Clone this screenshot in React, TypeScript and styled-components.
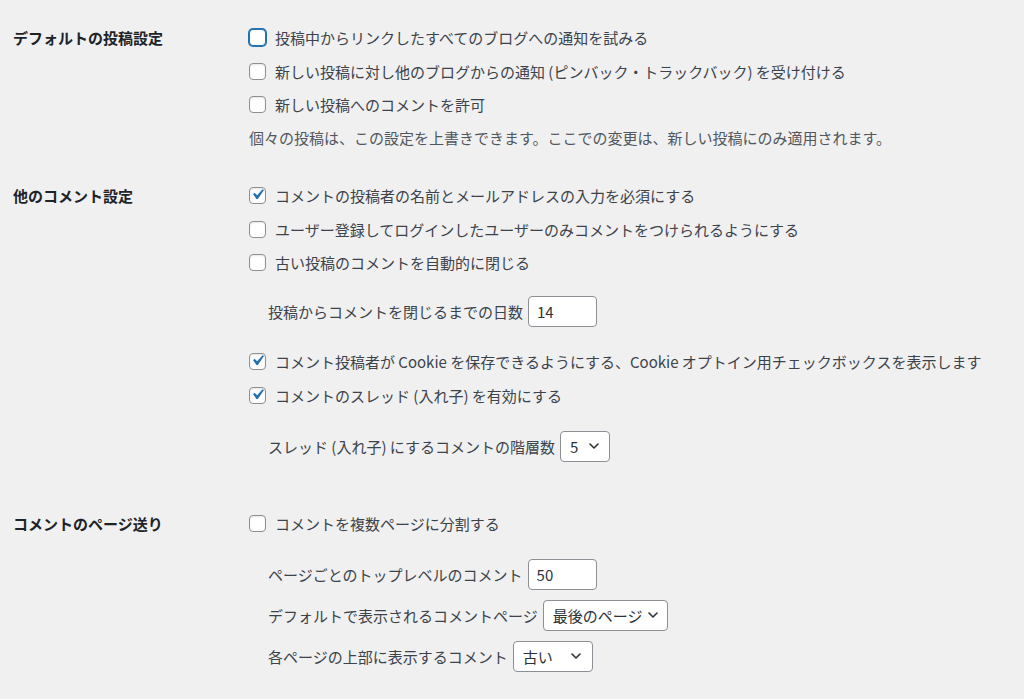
import React from 'react';
import styled, { createGlobalStyle } from 'styled-components';

const Global = createGlobalStyle`
  html, body { margin: 0; padding: 0; background: #f0f0f1; }
  body {
    font-family: "Noto Sans CJK JP", "Noto Sans", sans-serif;
    color: #3c434a;
    font-size: 15px;
  }
  * { box-sizing: border-box; }
`;

const Page = styled.div`
  display: flex;
  flex-direction: column;
  padding: 21px 0 0 13px;
`;

const Section = styled.section<{ $after: number }>`
  display: grid;
  grid-template-columns: 236px 1fr;
  margin-bottom: ${p => p.$after}px;
`;

const Heading = styled.div`
  font-weight: 700;
  color: #1d2327;
  font-size: 15px;
  height: 33.5px;
  line-height: 33.5px;
`;

const Fields = styled.div`
  display: flex;
  flex-direction: column;
`;

const CheckRow = styled.label`
  display: flex;
  align-items: center;
  gap: 9px;
  height: 33.5px;
  white-space: nowrap;
`;

const Box = styled.span<{ $focus?: boolean }>`
  flex: none;
  width: 17px;
  height: 17px;
  border: 1px solid ${p => (p.$focus ? '#2271b1' : '#8c8f94')};
  border-radius: 4px;
  background: #fff;
  box-shadow: ${p => (p.$focus ? '0 0 0 1px #2271b1' : 'inset 0 1px 2px rgba(0,0,0,0.1)')};
  display: flex;
  align-items: center;
  justify-content: center;
  overflow: visible;
`;

const Check = styled.svg`
  flex: none;
  width: 21px;
  height: 21px;
  margin: -2px 0 0 -1px;
`;

const Description = styled.p`
  margin: 6px 0 0;
  line-height: 20px;
  color: #50575e;
  white-space: nowrap;
`;

const SubGroup = styled.div<{ $top: number; $bottom: number; $gap?: number }>`
  display: flex;
  flex-direction: column;
  gap: ${p => p.$gap ?? 0}px;
  margin: ${p => p.$top}px 0 ${p => p.$bottom}px;
  padding-left: 19px;
`;

const SubRow = styled.div`
  display: flex;
  align-items: center;
  gap: 5px;
  height: 31px;
  white-space: nowrap;
`;

const TextInput = styled.div`
  width: 69px;
  height: 31px;
  border: 1px solid #8c8f94;
  border-radius: 4px;
  background: #fff;
  padding: 0 8px;
  display: flex;
  align-items: center;
  color: #2c3338;
`;

const SelectBox = styled.div<{ $w: number; $pr: number }>`
  width: ${p => p.$w}px;
  height: 31px;
  border: 1px solid #8c8f94;
  border-radius: 4px;
  background: #fff;
  padding: 0 ${p => p.$pr}px 0 9px;
  display: flex;
  align-items: center;
  justify-content: space-between;
  gap: 6px;
  color: #2c3338;
`;

const ChevronSvg = styled.svg`
  flex: none;
  width: 10px;
  height: 6px;
`;

const Chevron = () => (
  <ChevronSvg viewBox="0 0 10 6" fill="none">
    <path d="M1 1l4 4 4-4" stroke="#2c3338" strokeWidth="1.6" strokeLinecap="round" strokeLinejoin="round" />
  </ChevronSvg>
);

const Checkbox = ({ checked, focus }: { checked?: boolean; focus?: boolean }) => (
  <Box $focus={focus}>
    {checked && (
      <Check viewBox="0 0 20 20">
        <path d="M14.83 4.89l1.34.94-5.81 8.38H9.02L5.78 9.67l1.34-1.25 2.57 2.4z" fill="#2271b1" />
      </Check>
    )}
  </Box>
);

const Option = ({ label, checked, focus }: { label: string; checked?: boolean; focus?: boolean }) => (
  <CheckRow>
    <Checkbox checked={checked} focus={focus} />
    <span>{label}</span>
  </CheckRow>
);

export default function App() {
  return (
    <>
      <Global />
      <Page>
        <Section $after={31.5}>
          <Heading>デフォルトの投稿設定</Heading>
          <Fields>
            <Option focus label="投稿中からリンクしたすべてのブログへの通知を試みる" />
            <Option label="新しい投稿に対し他のブログからの通知 (ピンバック・トラックバック) を受け付ける" />
            <Option label="新しい投稿へのコメントを許可" />
            <Description>個々の投稿は、この設定を上書きできます。ここでの変更は、新しい投稿にのみ適用されます。</Description>
          </Fields>
        </Section>

        <Section $after={45}>
          <Heading>他のコメント設定</Heading>
          <Fields>
            <Option checked label="コメントの投稿者の名前とメールアドレスの入力を必須にする" />
            <Option label="ユーザー登録してログインしたユーザーのみコメントをつけられるようにする" />
            <Option label="古い投稿のコメントを自動的に閉じる" />
            <SubGroup $top={16.75} $bottom={17.75}>
              <SubRow>
                <span>投稿からコメントを閉じるまでの日数</span>
                <TextInput>14</TextInput>
              </SubRow>
            </SubGroup>
            <Option checked label="コメント投稿者が Cookie を保存できるようにする、Cookie オプトイン用チェックボックスを表示します" />
            <Option checked label="コメントのスレッド (入れ子) を有効にする" />
            <SubGroup $top={18.75} $bottom={0}>
              <SubRow>
                <span>スレッド (入れ子) にするコメントの階層数</span>
                <SelectBox $w={50} $pr={10}>
                  <span>5</span>
                  <Chevron />
                </SelectBox>
              </SubRow>
            </SubGroup>
          </Fields>
        </Section>

        <Section $after={20}>
          <Heading>コメントのページ送り</Heading>
          <Fields>
            <Option label="コメントを複数ページに分割する" />
            <SubGroup $top={18.25} $bottom={0} $gap={10}>
              <SubRow>
                <span>ページごとのトップレベルのコメント</span>
                <TextInput>50</TextInput>
              </SubRow>
              <SubRow>
                <span>デフォルトで表示されるコメントページ</span>
                <SelectBox $w={125} $pr={10}>
                  <span>最後のページ</span>
                  <Chevron />
                </SelectBox>
              </SubRow>
              <SubRow>
                <span>各ページの上部に表示するコメント</span>
                <SelectBox $w={80} $pr={11}>
                  <span>古い</span>
                  <Chevron />
                </SelectBox>
              </SubRow>
            </SubGroup>
          </Fields>
        </Section>
      </Page>
    </>
  );
}
